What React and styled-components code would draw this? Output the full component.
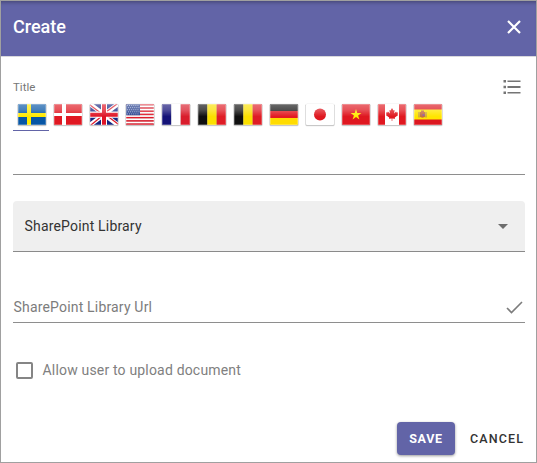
import React, { useState } from "react";
import styled, { createGlobalStyle } from "styled-components";

const GlobalStyle = createGlobalStyle`
  * { box-sizing: border-box; }
  body { margin: 0; background: #fff; font-family: Roboto, "Liberation Sans", sans-serif; }
  button { font-family: inherit; }
`;

const Dialog = styled.section`
  display: flex;
  flex-direction: column;
  width: 537px;
  height: 463px;
  border: 1px solid #a0a0a0;
  background: #fff;
`;

const Header = styled.header`
  display: flex;
  align-items: center;
  justify-content: space-between;
  flex: none;
  height: 56px;
  padding: 0 15px 3px 12px;
  background: #6264a7;
  border-bottom: 1px solid #d8d8dc;
  box-shadow: inset 0 4px 4px -3px rgba(0, 0, 0, 0.35);
  color: #fff;
`;

const Heading = styled.h1`
  margin: 0;
  font-size: 18px;
  line-height: 24px;
  font-weight: 500;
`;

const IconButton = styled.button`
  display: flex;
  padding: 0;
  border: 0;
  background: none;
  color: ${(p) => p.$color || "#757575"};
`;

const Body = styled.main`
  display: flex;
  flex-direction: column;
  flex: 1;
  padding: 22px 11px 0 12px;
`;

const TitleRow = styled.div`
  display: flex;
  justify-content: space-between;
  height: 21px;
  padding-right: 4px;
`;

const FieldLabel = styled.span`
  padding-top: 1px;
  font-size: 11.5px;
  line-height: 14px;
  color: #777;
`;

const Tabs = styled.div`
  display: flex;
  height: 31px;
`;

const Tab = styled.button`
  display: flex;
  justify-content: flex-end;
  width: 36px;
  padding: 3px 2.5px 0 0;
  border: 0;
  border-bottom: 1px solid ${(p) => (p.$active ? "#6264a7" : "transparent")};
  background: none;
`;

const FlagFrame = styled.svg`
  display: block;
  width: 30px;
  height: 24px;
`;

const TextInput = styled.input`
  width: 100%;
  height: 44px;
  padding: 0;
  border: 0;
  border-bottom: 1px solid #8e8e8e;
  outline: 0;
  background: none;
  font: 400 14px Roboto, sans-serif;
`;

const Select = styled.div`
  display: flex;
  align-items: center;
  justify-content: space-between;
  height: 51px;
  margin-top: 26px;
  padding: 0 17px 0 11.5px;
  border-bottom: 1px solid #8a8a8a;
  border-radius: 4px 4px 0 0;
  background: #efefef;
  font-size: 14px;
  letter-spacing: 0.18px;
  color: #333;
`;

const UrlField = styled.div`
  display: flex;
  align-items: center;
  justify-content: space-between;
  height: 31px;
  margin-top: 40px;
  padding: 0 2px 0 0.5px;
  border-bottom: 1px solid #8e8e8e;
  font-size: 14px;
  letter-spacing: 0.18px;
  color: #7c7c7c;
`;

const CheckRow = styled.label`
  display: flex;
  align-items: center;
  gap: 9.5px;
  height: 20px;
  margin-top: 37px;
  padding-left: 3px;
  font-size: 14px;
  letter-spacing: 0.18px;
  color: #808080;
`;

const Checkbox = styled.input`
  appearance: none;
  width: 17px;
  height: 17px;
  margin: 0;
  border: 2px solid #858585;
  border-radius: 2px;
  &:checked { background: #6264a7; border-color: #6264a7; }
`;

const Footer = styled.footer`
  display: flex;
  justify-content: flex-end;
  flex: none;
  gap: 7px;
  height: 41px;
  padding: 1px 4px 7px 0;
`;

const Button = styled.button`
  height: 33px;
  width: ${(p) => (p.$primary ? 58 : 70)}px;
  padding: 0;
  border: 0;
  border-radius: 4px;
  background: ${(p) => (p.$primary ? "#6264a7" : "transparent")};
  box-shadow: ${(p) => (p.$primary ? "0 1px 3px rgba(0,0,0,.4)" : "none")};
  color: ${(p) => (p.$primary ? "#fff" : "#333")};
  font-size: 12.5px;
  font-weight: ${(p) => (p.$primary ? 700 : 500)};
  letter-spacing: ${(p) => (p.$primary ? 0.7 : 1.15)}px;
  text-transform: uppercase;
`;

const stripes = (colors, vertical) =>
  colors.map((c, i) =>
    vertical ? (
      <rect key={i} x={(28 / colors.length) * i} width={28 / colors.length + 0.05} height="21" fill={c} />
    ) : (
      <rect key={i} y={(21 / colors.length) * i} width="28" height={21 / colors.length + 0.05} fill={c} />
    )
  );

const belgium = stripes(["#101010", "#fbe000", "#df1d26"], true);

const FLAGS = [
  { id: "se", art: <><path fill="#0756a5" d="M0 0h28v21H0z" /><path fill="#ffe900" d="M9 0h4v21H9zM0 9h28v4H0z" /></> },
  { id: "dk", art: <><path fill="#e01822" d="M0 0h28v21H0z" /><path fill="#fff" d="M8 0h4v21H8zM0 9h28v3H0z" /></> },
  {
    id: "gb",
    art: (
      <>
        <path fill="#162781" d="M0 0h28v21H0z" />
        <path stroke="#fff" strokeWidth="4.4" d="M0 0l28 21M28 0L0 21" />
        <path stroke="#df1d2b" strokeWidth="1.3" d="M0 1l12 9M16 11l12 9M27 0L16 8M12 12L1 21" />
        <path fill="#fff" d="M11 0h6v21h-6zM0 7.5h28v6.3H0z" />
        <path fill="#df1425" d="M12 0h4v21h-4zM0 8.800h28v4H0z" />
      </>
    ),
  },
  {
    id: "us",
    art: (
      <>
        {stripes(Array.from({ length: 13 }, (_, i) => (i % 2 ? "#fff" : "#df1c2c")))}
        <path fill="#263f8d" d="M0 0h14v11.3H0z" />
        {[0, 1, 2, 3, 4].map((r) => (
          <path key={r} d={`M${1 + (r % 2)} ${1.5 + r * 2.1}h12`} stroke="#bdc8e6" strokeWidth=".8" strokeDasharray=".9 1.2" />
        ))}
      </>
    ),
  },
  { id: "fr", art: stripes(["#151378", "#fff", "#d91d2c"], true) },
  { id: "be-fr", art: belgium },
  { id: "be-nl", art: belgium },
  { id: "de", art: stripes(["#151515", "#e31b23", "#ffdc00"]) },
  { id: "jp", art: <><path fill="#fff" d="M0 0h28v21H0z" /><circle cx="14" cy="10.5" r="6" fill="#df1820" /></> },
  { id: "vn", art: <><path fill="#df1720" d="M0 0h28v21H0z" /><path fill="#ffeb00" d="M14 5l1.3 4h4.1l-3.3 2.4 1.3 4L14 12.9l-3.4 2.5 1.3-4L8.6 9h4.1z" /></> },
  {
    id: "ca",
    art: (
      <>
        <path fill="#fff" d="M0 0h28v21H0z" />
        <path fill="#e01820" d="M0 0h7v21H0zM21 0h7v21h-7z" />
        <path fill="#e01820" d="M14 4l1.5 2.5 1.100-.6-.5 3.500 2-1.800.4 1 1.500-.2-.5 2 .8.5-3.500 2.600.3 1.200-2.800-.3V17h-.6v-2.600l-2.800.3.3-1.200-3.500-2.600.8-.5-.5-2 1.500.2.4-1 2 1.800-.5-3.500 1.100.6z" />
      </>
    ),
  },
  {
    id: "es",
    art: (
      <>
        <path fill="#dc1720" d="M0 0h28v21H0z" />
        <path fill="#ffe500" d="M0 5.5h28v10H0z" />
        <path fill="#c36e45" d="M6 8h5v4.5c0 1.500-5 1.500-5 0zM7 6.500h3V8H7z" />
        <path stroke="#ad7c67" d="M5 8v5.5M12 8v5.5" />
        <path fill="#94629a" d="M8.5 10h2v2h-2z" />
      </>
    ),
  },
];

/* Glossy flag tile: the sheen fades out just past the middle */
const Flag = ({ id, art }) => (
  <FlagFrame viewBox="0 0 30 24" aria-label={id}>
    <defs>
      <clipPath id={`clip-${id}`}><rect width="28" height="21" rx="1" /></clipPath>
      <linearGradient id={`gloss-${id}`} x2="0" y2="1">
        <stop stopColor="#fff" stopOpacity=".36" />
        <stop offset=".5" stopColor="#fff" stopOpacity=".25" />
        <stop offset="1" stopColor="#fff" stopOpacity=".02" />
      </linearGradient>
    </defs>
    <rect x=".3" y=".8" width="29.4" height="22.4" rx="1.5" fill="#000" opacity=".13" />
    <rect x=".8" y="1.6" width="28.4" height="21" rx="1" fill="#000" opacity=".2" />
    <g transform="translate(1 1)" clipPath={`url(#clip-${id})`}>
      {art}
      <path d="M0 0h28v12H0z" fill={`url(#gloss-${id})`} />
      <rect x=".5" y=".5" width="27" height="20" fill="none" stroke="#fff" strokeOpacity=".24" />
    </g>
  </FlagFrame>
);

const CloseIcon = () => (
  <svg width="14" height="14" viewBox="0 0 14 14" fill="none" stroke="currentColor" strokeWidth="2.2">
    <path d="M1 1l12 12M13 1L1 13" />
  </svg>
);

const ListIcon = () => (
  <svg width="18" height="16" viewBox="0 0 18 16" fill="currentColor">
    <path d="M.5 1H3v2.500H.5zM4.500 1.500h13v1.500h-13zM.5 6.800H3v2.400H.5zM4.500 7h13v2h-13zM.5 12.500H3V15H.5zM4.500 13h13v1.500h-13z" />
  </svg>
);

const ArrowIcon = () => (
  <svg width="10" height="5" viewBox="0 0 10 5"><path d="M0 0h10L5 5z" fill="#6d6d6d" /></svg>
);

const CheckIcon = () => (
  <svg width="17" height="13" viewBox="0 0 17 13" fill="none" stroke="currentColor" strokeWidth="1.6">
    <path d="M1 7l4.500 4.500L16 1" />
  </svg>
);

export default function App() {
  const [active, setActive] = useState("se");
  return (
    <>
      <GlobalStyle />
      <Dialog>
        <Header>
          <Heading>Create</Heading>
          <IconButton $color="#fff" aria-label="Close"><CloseIcon /></IconButton>
        </Header>
        <Body>
          <TitleRow>
            <FieldLabel>Title</FieldLabel>
            <IconButton aria-label="List"><ListIcon /></IconButton>
          </TitleRow>
          <Tabs>
            {FLAGS.map((f) => (
              <Tab key={f.id} $active={active === f.id} onClick={() => setActive(f.id)}>
                <Flag {...f} />
              </Tab>
            ))}
          </Tabs>
          <TextInput aria-label="Title" />
          <Select><span>SharePoint Library</span><ArrowIcon /></Select>
          <UrlField><span>SharePoint Library Url</span><CheckIcon /></UrlField>
          <CheckRow><Checkbox type="checkbox" />Allow user to upload document</CheckRow>
        </Body>
        <Footer>
          <Button $primary>Save</Button>
          <Button>Cancel</Button>
        </Footer>
      </Dialog>
    </>
  );
}
